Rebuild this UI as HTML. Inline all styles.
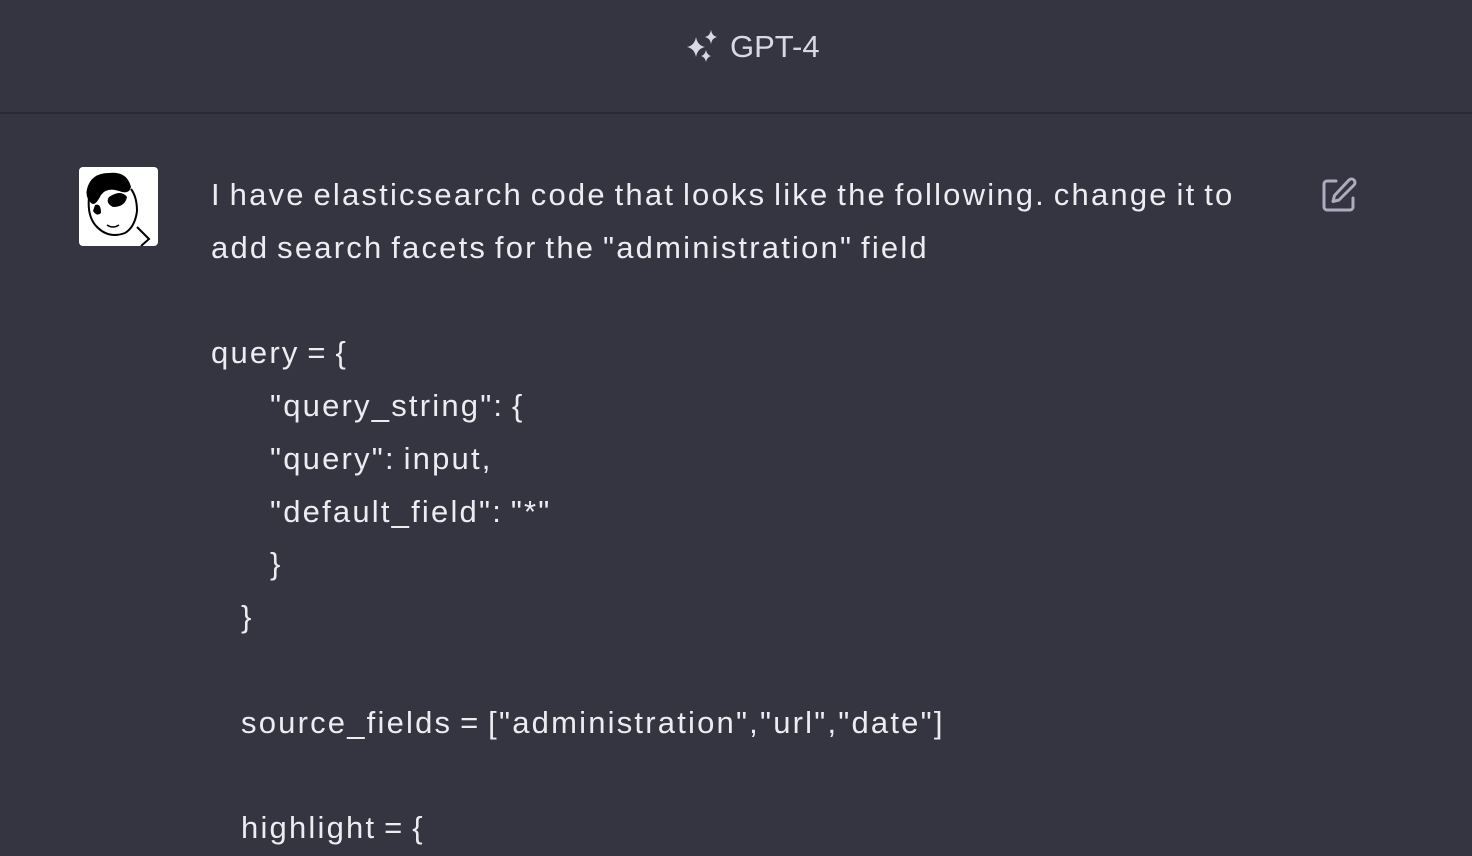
<!DOCTYPE html>
<html><head><meta charset="utf-8"><style>
html,body{margin:0;padding:0;background:#343541;width:1472px;height:856px;overflow:hidden}
body{font-family:"Liberation Sans",sans-serif;color:#ececf1}
.hdr{height:114px;border-bottom:2px solid #2a2b32;box-sizing:border-box;position:relative}
.hdr .t{position:absolute;left:730px;top:29px;font-size:31px;color:#d9d9e3}
.hdr svg{position:absolute;left:686px;top:30px}
.av{position:absolute;left:79px;top:167px;width:79px;height:79px;background:#fff;border-radius:4px;overflow:hidden}
.msg{position:absolute;left:211px;top:169px;font-size:31px;letter-spacing:2.2px;word-spacing:-3px;line-height:52.75px;width:1100px}
.msg div{white-space:nowrap;height:52.75px}
</style></head><body>
<div class="hdr">
<svg width="34" height="34" viewBox="0 0 34 34" fill="#d9d9e3"><path d="M10 7 Q11.5 15.5 19 17 Q11.5 18.5 10 27 Q8.5 18.5 1 17 Q8.5 15.5 10 7Z"/><path d="M25 0 Q26 6 31 7 Q26 8 25 14 Q24 8 19 7 Q24 6 25 0Z"/><path d="M20 20 Q21 25 25 26 Q21 27 20 32 Q19 27 15 26 Q19 25 20 20Z"/></svg>
<div class="t">GPT-4</div>
</div>
<div class="av"><svg width="79" height="79" viewBox="0 0 79 79"><path d="M8 22 Q12 6 30 6 Q48 4 52 20 Q50 28 40 24 Q28 20 22 28 Q16 40 12 36 Q6 30 8 22Z" fill="#000"/><path d="M10 30 Q8 50 18 60 Q30 72 46 66 Q56 60 58 44 Q58 30 52 22" fill="none" stroke="#000" stroke-width="2"/><path d="M30 30 Q42 22 48 30 Q46 40 34 40 Q26 36 30 30Z" fill="#000"/><path d="M16 38 Q22 36 22 46 Q18 50 14 44Z" fill="#000"/><path d="M28 58 Q34 62 40 58" fill="none" stroke="#000" stroke-width="1.5"/><path d="M58 60 L70 72 L62 79" fill="none" stroke="#000" stroke-width="2"/></svg></div>
<svg width="36" height="36" viewBox="0 0 36 36" fill="none" stroke="#acacbe" stroke-width="3" stroke-linecap="round" stroke-linejoin="round" style="position:absolute;left:1321px;top:177px"><path d="M15 4 H6 A3 3 0 0 0 3 7 V30 A3 3 0 0 0 6 33 H29 A3 3 0 0 0 32 30 V21"/><path d="M28 3 A3.5 3.5 0 0 1 33 8 L18 23 L12 24.5 L13.5 18.5Z"/></svg>
<div class="msg">
<div>I have elasticsearch code that looks like the following. change it to</div>
<div>add search facets for the "administration" field</div>
<div></div>
<div>query = {</div>
<div style="padding-left:59px">"query_string": {</div>
<div style="padding-left:59px">"query": input,</div>
<div style="padding-left:59px">"default_field": "*"</div>
<div style="padding-left:59px">}</div>
<div style="padding-left:30px">}</div>
<div></div>
<div style="padding-left:30px">source_fields = ["administration","url","date"]</div>
<div></div>
<div style="padding-left:30px">highlight = {</div>
</div>
</body></html>
